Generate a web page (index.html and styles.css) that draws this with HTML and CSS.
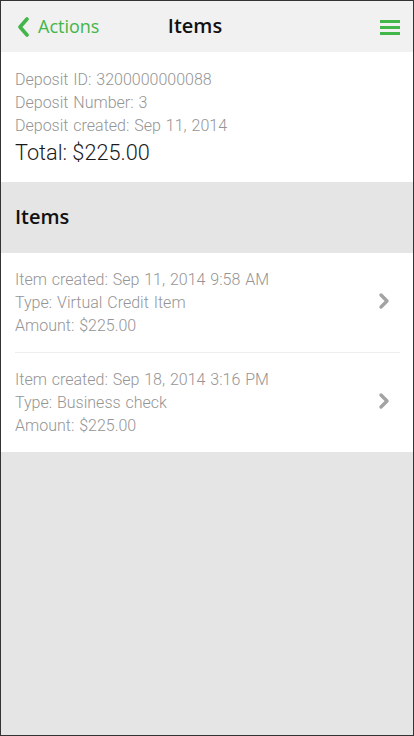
FILE: index.html
```html
<!DOCTYPE html>
<html>
<head>
<meta charset="utf-8">
<link rel="stylesheet" href="styles.css">
</head>
<body>
<div class="frame">
  <header class="topbar">
    <a class="back">
      <svg class="back-icon" width="12" height="20" viewBox="0 0 12 20"><path d="M10 2 L3 10 L10 18" fill="none" stroke="#43b64a" stroke-width="3.6" stroke-linecap="round" stroke-linejoin="round"/></svg>
      <span>Actions</span>
    </a>
    <h1 class="title">Items</h1>
    <svg class="menu-icon" width="20" height="16" viewBox="0 0 20 16"><rect x="0" y="1" width="20" height="3" fill="#43b64a"/><rect x="0" y="7" width="20" height="3" fill="#43b64a"/><rect x="0" y="13" width="20" height="3" fill="#43b64a"/></svg>
  </header>
  <section class="summary">
    <p class="line">Deposit ID: 3200000000088</p>
    <p class="line">Deposit Number: 3</p>
    <p class="line">Deposit created: Sep 11, 2014</p>
    <p class="total">Total: $225.00</p>
  </section>
  <h2 class="section-title">Items</h2>
  <ul class="items">
    <li class="item">
      <div class="item-text">
        <p class="line">Item created: Sep 11, 2014 9:58 AM</p>
        <p class="line">Type: Virtual Credit Item</p>
        <p class="line">Amount: $225.00</p>
      </div>
      <svg class="chev" width="12" height="18" viewBox="0 0 12 18"><path d="M3 3 L9 9 L3 15" fill="none" stroke="#a3a3a3" stroke-width="3.4" stroke-linecap="round" stroke-linejoin="round"/></svg>
    </li>
    <li class="item">
      <div class="item-text">
        <p class="line">Item created: Sep 18, 2014 3:16 PM</p>
        <p class="line">Type: Business check</p>
        <p class="line">Amount: $225.00</p>
      </div>
      <svg class="chev" width="12" height="18" viewBox="0 0 12 18"><path d="M3 3 L9 9 L3 15" fill="none" stroke="#a3a3a3" stroke-width="3.4" stroke-linecap="round" stroke-linejoin="round"/></svg>
    </li>
  </ul>
</div>
</body>
</html>
```
FILE: styles.css
```css
* { box-sizing: border-box; }
html, body { margin: 0; padding: 0; }
body { background: #e5e5e5; font-family: "Open Sans", sans-serif; }
.frame {
  width: 414px;
  height: 736px;
  border: 1px solid #333;
  background: #e5e5e5;
  display: flex;
  flex-direction: column;
}
.topbar {
  height: 51px;
  background: #f1f1f1;
  display: flex;
  align-items: center;
  padding: 0 13px 0 16px;
  position: relative;
}
.back {
  display: flex;
  align-items: center;
  gap: 9px;
  color: #43b64a;
  font-size: 18px;
  font-family: "Open Sans", sans-serif;
}
.back span { margin-top: -1px; }
.title {
  position: absolute;
  left: 0; right: 24px;
  text-align: center;
  margin: 0;
  font-size: 20px;
  font-weight: 600;
  color: #111;
  pointer-events: none;
  top: 11px;
}
.menu-icon { margin-left: auto; }
.summary {
  background: #fff;
  padding: 16px 14px 15px;
}
.line {
  margin: 0;
  font-family: "Roboto", sans-serif;
  font-weight: 300;
  font-size: 16px;
  word-spacing: 1px;
  line-height: 23px;
  color: #959595;
}
.total {
  margin: 1px 0 0;
  font-family: "Roboto", sans-serif;
  font-weight: 300;
  font-size: 21.7px;
  line-height: 29px;
  color: #1a1a1a;
}
.section-title {
  margin: 0;
  height: 71px;
  display: flex;
  align-items: center;
  padding: 0 14px 3px;
  font-size: 20px;
  font-weight: 600;
  color: #111;
}
.items {
  list-style: none;
  margin: 0;
  padding: 0 13px 0 14px;
  background: #fff;
}
.item {
  display: flex;
  align-items: center;
  padding: 15px 0 15px;
  border-bottom: 1px solid #eee;
}
.item:last-child { border-bottom: none; }
.item-text { flex: 1; }
.chev { margin-right: 10px; margin-top: -3px; }
```
